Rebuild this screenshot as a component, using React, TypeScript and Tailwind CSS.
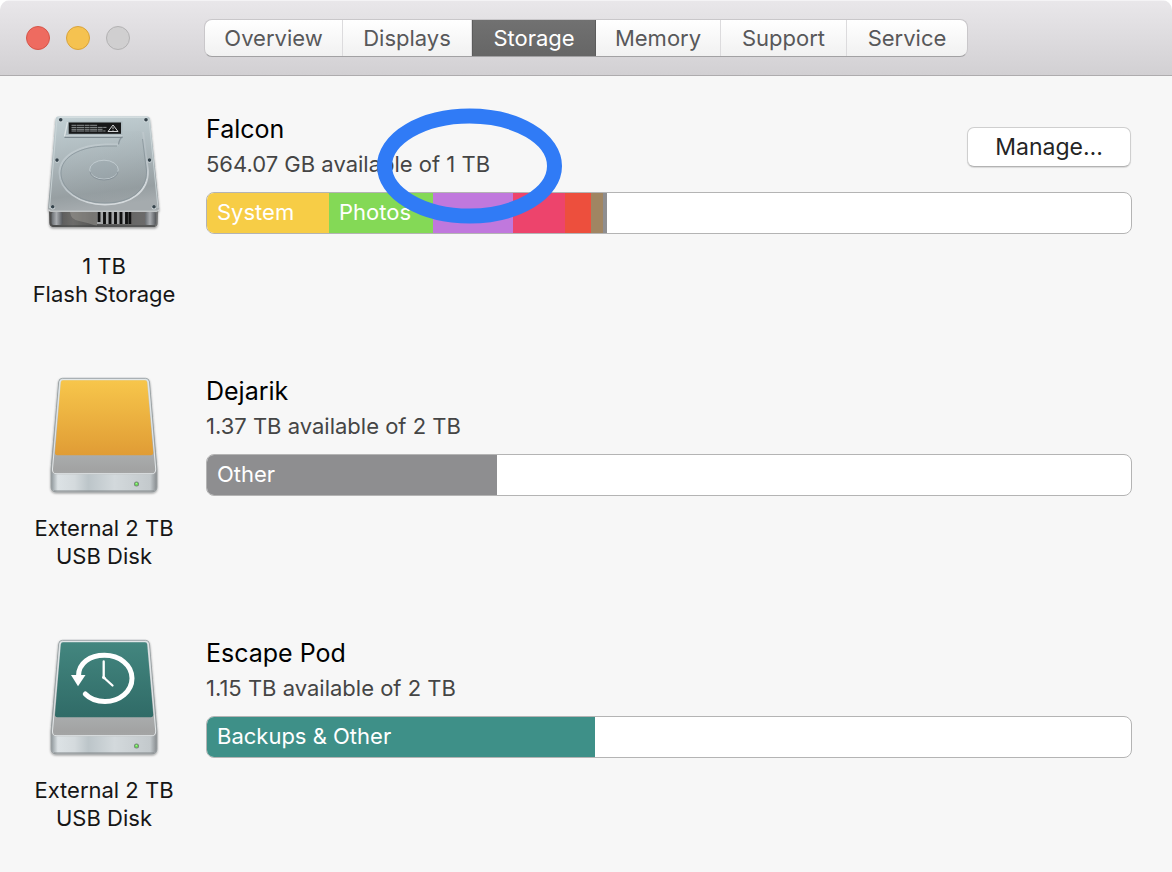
import { useState } from "react";
import type { ReactNode } from "react";

type Segment = { label?: string; name: string; share: number; color: string };

const tabs = [
  { name: "Overview", width: "w-[138px]" },
  { name: "Displays", width: "w-[129px]" },
  { name: "Storage", width: "w-[124px]" },
  { name: "Memory", width: "w-[125px]" },
  { name: "Support", width: "w-[126px]" },
  { name: "Service", width: "w-[120px]" },
];

const falcon: Segment[] = [
  { name: "System", label: "System", share: 122, color: "bg-[#f7cd46]" },
  { name: "Photos", label: "Photos", share: 104, color: "bg-[#84d956]" },
  { name: "Apps", share: 80, color: "bg-[#c078dd]" },
  { name: "Music", share: 52, color: "bg-[#ed446c]" },
  { name: "Documents", share: 26, color: "bg-[#ed4f3d]" },
  { name: "Mail", share: 12, color: "bg-[#a08562]" },
  { name: "Other", share: 4, color: "bg-[#8e8e90]" },
];
const dejarik: Segment[] = [{ name: "Other", label: "Other", share: 290, color: "bg-[#8e8e90]" }];
const escapePod: Segment[] = [
  { name: "Backups", label: "Backups & Other", share: 388, color: "bg-[#3e9088]" },
];

const BAR_TOTAL = 924;

function InternalDrive() {
  return (
    <svg viewBox="-1 0 150 140" className="h-[140px] w-[150px]" aria-hidden="true">
      <defs>
        <linearGradient id="hdTop" x1="0" y1="0" x2="0.15" y2="1">
          <stop offset="0" stopColor="#c3d1d5" />
          <stop offset="0.5" stopColor="#abb6ba" />
          <stop offset="0.85" stopColor="#979fa2" />
          <stop offset="1" stopColor="#a5abae" />
        </linearGradient>
        <linearGradient id="hdWell" x1="0" y1="0" x2="0.3" y2="1">
          <stop offset="0" stopColor="#becbcf" />
          <stop offset="1" stopColor="#8a9498" />
        </linearGradient>
        <linearGradient id="hdHub" x1="0" y1="0" x2="0.2" y2="1">
          <stop offset="0" stopColor="#a3afb4" />
          <stop offset="1" stopColor="#99a4a9" />
        </linearGradient>
        <linearGradient id="hdRim" x1="0" y1="0" x2="0.4" y2="1">
          <stop offset="0" stopColor="#cad4d7" />
          <stop offset="0.6" stopColor="#b3bdc2" />
          <stop offset="1" stopColor="#d5dadd" />
        </linearGradient>
        <linearGradient id="hdFront" x1="0" y1="0" x2="1" y2="0">
          <stop offset="0" stopColor="#4e4e4e" />
          <stop offset="0.22" stopColor="#6d6c6a" />
          <stop offset="0.4" stopColor="#555" />
          <stop offset="0.84" stopColor="#6b6a69" />
          <stop offset="1" stopColor="#6f7071" />
        </linearGradient>
        <linearGradient id="hdPost" x1="0" y1="0" x2="1" y2="0">
          <stop offset="0" stopColor="#676b6f" />
          <stop offset="0.45" stopColor="#a9acb0" />
          <stop offset="1" stopColor="#55585c" />
        </linearGradient>
        <filter id="hdShadow" x="-10%" y="-10%" width="120%" height="130%">
          <feDropShadow dx="0" dy="1.5" stdDeviation="1.2" floodOpacity="0.4" />
        </filter>
      </defs>
      <g filter="url(#hdShadow)">
        <path d="M19 104h109l-.3 14q0 4-4 4h-100q-4.200 0-4.400-4z" fill="url(#hdFront)" />
        <path d="M29 11.300h87.500q3.200 0 3.600 3l9.200 89q.2 3.200-3 3.200H21q-3.200 0-3-3.200l7.500-89q.4-3 3.500-3z" fill="url(#hdTop)" />
      </g>
      <path d="M28.500 12.200h89" stroke="#dde5e7" strokeWidth="1" />
      <path d="M27 14l-7.500 89" stroke="#ced8db" strokeWidth=".8" />
      <path d="M119 14l9 89" stroke="#ced8db" strokeWidth=".8" />
      <path d="M18.600 104.500q.4 1.700 2.400 1.700h105.500q2.200 0 2.500-1.700" fill="none" stroke="#d5d9da" strokeWidth="1.100" />
      <path d="M40 107q1 8 9 9 10 2 18 5v-14z" fill="#a29f9a" opacity=".45" />
      <rect x="21.500" y="107" width="11" height="13" rx="2" fill="url(#hdPost)" />
      <rect x="115" y="107" width="11" height="13" rx="2" fill="url(#hdPost)" />
      <rect x="67" y="107" width="34" height="12" fill="#a3a5a6" />
      <path
        d="M69 107v10M74.500 107v12M80 107v12M85.500 107v12M91 107v12M96.500 107v12M99.800 107v12"
        stroke="#111"
        strokeWidth="2.900"
      />
      <path d="M22 121h103" stroke="#434445" strokeWidth="1.200" />
      <path
        d="M88.700 39.500H76C49 40 29.500 51 29.500 68S49 99.500 75 99.500s43.500-13 43-34L113.500 32q-.8-5-4-6H92z"
        fill="url(#hdWell)"
        opacity=".3"
      />
      <path
        d="M88.700 39.500H76C49 40 29.500 51 29.500 68S49 99.500 75 99.500s43.500-13 43-34L113 27"
        fill="none"
        stroke="url(#hdRim)"
        strokeWidth="1.800"
      />
      <path
        d="M87 41H76C50 41.500 31 52 31 68s19 30 44 30 42-12.500 41.500-32L112.500 34"
        fill="none"
        stroke="#88949a"
        strokeWidth=".8"
      />
      <path d="M37.500 16.500h55v12l.5 3.500-4.300 7V33H34.500z" fill="#adbabf" />
      <path d="M37.500 17L34.500 31.500" stroke="#dce3e5" strokeWidth="1.300" />
      <path d="M92.500 31.500q-3 2-4 8" fill="none" stroke="#8b979d" strokeWidth="1.200" />
      <path d="M35.500 31h57" stroke="#dce3e5" strokeWidth="1" />
      <path d="M34.500 32.300h58" stroke="#7d8990" strokeWidth="1.200" />
      <rect x="38.700" y="17.500" width="52.300" height="11.300" fill="#171819" />
      <path
        d="M41.500 20.300h26M41.500 22.400h35M41.500 24.300h31M41.500 26h34"
        stroke="#a8adae"
        strokeWidth=".8"
        strokeDasharray="5 .5 7 .6"
      />
      <path d="M83 20l5 6.500H78z" fill="none" stroke="#d4d6d7" strokeWidth="1" />
      <path d="M83 22.200v2M83 25v.7" stroke="#d4d6d7" strokeWidth=".9" />
      <ellipse cx="74" cy="64.700" rx="14.300" ry="9.500" fill="url(#hdHub)" stroke="#c3cdd1" strokeWidth=".9" />
      <path d="M60 66.500a14 8.500 0 0 0 28 0" fill="none" stroke="#88939a" strokeWidth="1" />
      {[
        [30.7, 15],
        [116, 15],
        [27, 55.3],
        [119.5, 55.3],
        [22.7, 102],
        [124, 102],
      ].map(([x, y]) => (
        <g key={`${x}-${y}`}>
          <circle cx={x} cy={y + 0.2} r="2.300" fill="#cdd5d8" />
          <circle cx={x} cy={y - 0.2} r="1.800" fill="#35434b" />
        </g>
      ))}
    </svg>
  );
}

function ExternalDrive({ id, from, to, children }: { id: string; from: string; to: string; children?: ReactNode }) {
  return (
    <svg viewBox="-1 0 150 140" className="h-[140px] w-[150px]" aria-hidden="true">
      <defs>
        <linearGradient id={`${id}Face`} x1="0" y1="0" x2="0" y2="1">
          <stop offset="0" stopColor={from} />
          <stop offset="1" stopColor={to} />
        </linearGradient>
        <linearGradient id={`${id}Body`} x1="0" y1="0" x2="0" y2="1">
          <stop offset="0" stopColor="#d3dcdf" />
          <stop offset="0.8" stopColor="#a2a3a3" />
          <stop offset="1" stopColor="#acadae" />
        </linearGradient>
        <linearGradient id={`${id}Front`} x1="0" y1="0" x2="1" y2="0">
          <stop offset="0" stopColor="#929a9e" />
          <stop offset="0.06" stopColor="#dce2e5" />
          <stop offset="0.22" stopColor="#d4dadd" />
          <stop offset="0.35" stopColor="#bcc5c9" />
          <stop offset="0.6" stopColor="#d3d9dc" />
          <stop offset="0.94" stopColor="#c3c9cc" />
          <stop offset="1" stopColor="#898e91" />
        </linearGradient>
        <filter id={`${id}Shadow`} x="-10%" y="-10%" width="120%" height="130%">
          <feDropShadow dx="0" dy="1" stdDeviation="1.200" floodOpacity="0.4" />
        </filter>
      </defs>
      <g filter={`url(#${id}Shadow)`}>
        <path
          d="M32.500 11.300h83q3.500 0 4 3.500L127 102v18q0 5-5 5H26q-5 0-5-5v-18l7.700-87.200q.3-3.500 3.800-3.500z"
          fill={`url(#${id}Body)`}
          stroke="#92999c"
          strokeWidth=".8"
        />
      </g>
      <path
        d="M21.500 104q.5 3.300 4 3.300h97q3.500 0 4-3.300v16q0 4.500-5 4.500h-95q-5 0-5-4.500z"
        fill={`url(#${id}Front)`}
      />
      <path
        d="M32.500 12.500h83q2.400 0 2.700 2.500l7.500 87q0 4.700-3.500 4.700H26q-3.700 0-3.500-4.700L30 15q.2-2.500 2.500-2.500z"
        fill="none"
        stroke="#e2e7e9"
        strokeWidth="1"
      />
      <path d="M24 124h100" stroke="#858a8c" strokeWidth="1" />
      <path
        d="M33 13.300h82q2 0 2.200 2.200l6 70q.1 2.800-2.500 2.800H27.500q-2.700 0-2.500-2.800l5.800-70q.2-2.200 2.200-2.200z"
        fill={`url(#${id}Face)`}
      />
      <circle cx="106.500" cy="117" r="2.500" fill="#76807a" />
      <circle cx="106.500" cy="117" r="1.700" fill="#69dc55" />
      <circle cx="106.300" cy="116.600" r=".7" fill="#b5f5a4" />
      {children}
    </svg>
  );
}

function TimeMachineMark() {
  return (
    <g fill="none" stroke="#fff" strokeLinecap="round" strokeLinejoin="round">
      <path
        d="M48.500 47C48.500 34 60 26.300 74.500 26.300c15 0 27.500 9.700 27.500 23S89.500 72.500 75 72.500c-8 0-15-2.600-19.700-7.500"
        strokeWidth="5"
      />
      <path d="M41 46h14.500L48 57.200z" fill="#fff" stroke="none" />
      <path d="M73.700 32.500v16l8.800 8" strokeWidth="2.300" />
      <circle cx="73.700" cy="48.500" r="1.200" fill="#fff" strokeWidth="1" />
    </g>
  );
}

function Volume(props: {
  icon: ReactNode;
  caption: [string, string];
  name: string;
  detail: string;
  segments: Segment[];
  manage?: boolean;
  marked?: boolean;
}) {
  return (
    <article className="relative flex h-[262px]">
      <div className="flex w-[206px] shrink-0 flex-col items-center pl-0.5 text-center text-[22px] leading-7 text-[#161616]">
        {props.icon}
        <p className="mt-[7px]">
          {props.caption[0]}
          <br />
          {props.caption[1]}
        </p>
      </div>
      <div className="min-w-0 flex-1 pt-[6px] pr-10">
        <div className="flex items-start justify-between">
          <div>
            <h2 className="text-[25px] leading-9 text-black">{props.name}</h2>
            <p className="text-[22px] leading-[34px] text-[#454545]">{props.detail}</p>
          </div>
          {props.manage && (
            <button
              type="button"
              className="mt-4 mr-px h-10 w-[164px] rounded-[7px] border border-[#cfcfcf] border-b-[#b3b3b3] bg-white text-[23px] leading-8 text-[#252525] shadow-[0_1px_1px_rgba(0,0,0,0.12)]"
            >
              Manage…
            </button>
          )}
        </div>
        <div className="mt-[11px] flex h-[42px] overflow-hidden rounded-lg border border-[#b4b4b4] bg-white">
          {props.segments.map((s) => (
            <div
              key={s.name}
              className={`shrink-0 text-[22px] leading-[38px] whitespace-nowrap text-white ${s.color} ${s.label ? "pl-[10px]" : ""}`}
              style={{ width: `${(s.share / BAR_TOTAL) * 100}%` }}
            >
              {s.label}
            </div>
          ))}
        </div>
      </div>
      {props.marked && (
        <svg
          viewBox="0 0 186 116"
          className="pointer-events-none absolute top-[3px] left-[377px] h-[116px] w-[186px]"
          aria-hidden="true"
        >
          <ellipse cx="92.500" cy="58" rx="85" ry="50" fill="none" stroke="#307bf6" strokeWidth="15" />
        </svg>
      )}
    </article>
  );
}

export default function App() {
  const [active, setActive] = useState("Storage");
  return (
    <div className="min-h-screen bg-white font-['Inter',sans-serif]">
      <div className="min-h-screen overflow-hidden rounded-[10px] bg-[#f7f7f7]">
        <header className="grid h-[76px] grid-cols-[1fr_auto_1fr] items-center border-t border-b border-t-[#f4f3f5] border-b-[#aeacae] bg-linear-to-b from-[#e9e7ea] to-[#d2d0d3]">
          <div className="flex gap-4 pl-[26px]">
            <button type="button" aria-label="Close" className="size-6 rounded-full border border-[#d65549] bg-[#ee6b60]" />
            <button type="button" aria-label="Minimize" className="size-6 rounded-full border border-[#d9a33b] bg-[#f5c250]" />
            <button type="button" aria-label="Zoom" className="size-6 rounded-full border border-[#b3b2b3] bg-[#d0cfd0]" />
          </div>
          <nav className="flex h-[38px] overflow-hidden rounded-[8px] border border-[#c9c7ca] border-b-[#a2a1a3] bg-linear-to-b from-white to-[#f1f1f1] text-[22px] text-[#58585a]">
            {tabs.map((tab) => (
              <button
                key={tab.name}
                type="button"
                onClick={() => setActive(tab.name)}
                className={`${tab.width} ${
                  tab.name === active
                    ? "border-x border-[#5c5c5c] bg-linear-to-b from-[#717171] to-[#666666] text-white"
                    : "border-r border-[#dcdbdd] last:border-r-0"
                }`}
              >
                {tab.name}
              </button>
            ))}
          </nav>
        </header>
        <main className="pt-[29px]">
          <Volume
            icon={<InternalDrive />}
            caption={["1 TB", "Flash Storage"]}
            name="Falcon"
            detail="564.07 GB available of 1 TB"
            segments={falcon}
            manage
            marked
          />
          <Volume
            icon={<ExternalDrive id="usb" from="#f7c64b" to="#e09c35" />}
            caption={["External 2 TB", "USB Disk"]}
            name="Dejarik"
            detail="1.37 TB available of 2 TB"
            segments={dejarik}
          />
          <Volume
            icon={
              <ExternalDrive id="backup" from="#43867f" to="#306b67">
                <TimeMachineMark />
              </ExternalDrive>
            }
            caption={["External 2 TB", "USB Disk"]}
            name="Escape Pod"
            detail="1.15 TB available of 2 TB"
            segments={escapePod}
          />
        </main>
      </div>
    </div>
  );
}
